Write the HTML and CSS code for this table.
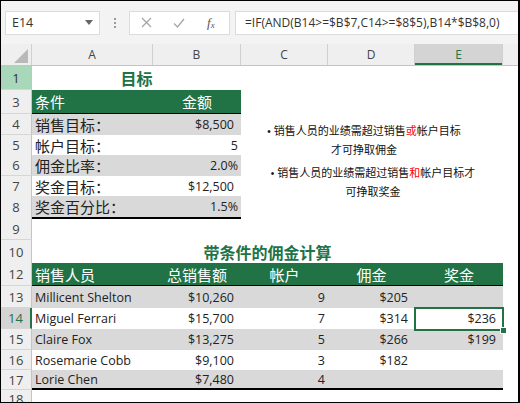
FILE: index.html
```html
<!DOCTYPE html>
<html lang="zh">
<head>
<meta charset="utf-8">
<link rel="stylesheet" href="styles.css">
</head>
<body>
<div class="app">
  <div class="toolbar">
    <div class="namebox"><span>E14</span><svg class="caret" width="8" height="5" viewBox="0 0 8 5"><path d="M0 0H8L4 5Z" fill="#666"/></svg></div>
    <div class="dots"><i></i><i></i><i></i></div>
    <div class="fxbox">
      <svg class="ic-x" width="11" height="11" viewBox="0 0 11 11"><path d="M1 1L10 10M10 1L1 10" stroke="#a6a6a6" stroke-width="1.3" fill="none"/></svg>
      <svg class="ic-ok" width="12" height="10" viewBox="0 0 12 10"><path d="M1 5.5L4.5 9L11 1" stroke="#a6a6a6" stroke-width="1.3" fill="none"/></svg>
      <span class="fx">f<sub>x</sub></span>
    </div>
    <div class="formula">=IF(AND(B14&gt;=$B$7,C14&gt;=$8$5),B14*$B$8,0)</div>
  </div>

  <div class="row colhead">
    <div class="corner"><svg width="14" height="14" viewBox="0 0 14 14"><path d="M14 0V14H0Z" fill="#b9b9b9"/></svg></div>
    <div class="ch">A</div><div class="ch">B</div><div class="ch">C</div><div class="ch">D</div><div class="ch ch-sel">E</div><div class="ch ch-last"></div>
  </div>

  <div class="row h24">
    <div class="rh rh-green">1</div>
    <div class="c title span2">目标</div>
    <div class="c"></div><div class="c"></div><div class="c"></div><div class="c"></div>
  </div>
  <div class="row h24">
    <div class="rh">3</div>
    <div class="c th zh l">条件</div><div class="c th zh ctr">金额</div>
    <div class="c"></div><div class="c"></div><div class="c"></div><div class="c"></div>
  </div>
  <div class="row h21">
    <div class="rh">4</div>
    <div class="c band zh l">销售目标：</div><div class="c band r cur">$8,500</div>
    <div class="c"></div><div class="c"></div><div class="c"></div><div class="c"></div>
  </div>
  <div class="row h20">
    <div class="rh">5</div>
    <div class="c zh l">帐户目标：</div><div class="c r num">5</div>
    <div class="c"></div><div class="c"></div><div class="c"></div><div class="c"></div>
  </div>
  <div class="row h21">
    <div class="rh">6</div>
    <div class="c band zh l">佣金比率：</div><div class="c band r num">2.0%</div>
    <div class="c"></div><div class="c"></div><div class="c"></div><div class="c"></div>
  </div>
  <div class="row h20">
    <div class="rh">7</div>
    <div class="c zh l">奖金目标：</div><div class="c r cur">$12,500</div>
    <div class="c"></div><div class="c"></div><div class="c"></div><div class="c"></div>
  </div>
  <div class="row h22">
    <div class="rh">8</div>
    <div class="c band last zh l">奖金百分比：</div><div class="c band last r num">1.5%</div>
    <div class="c"></div><div class="c"></div><div class="c"></div><div class="c"></div>
  </div>
  <div class="row h22">
    <div class="rh">9</div>
    <div class="c"></div><div class="c"></div><div class="c"></div><div class="c"></div><div class="c"></div><div class="c"></div>
  </div>
  <div class="row h23">
    <div class="rh">10</div>
    <div class="c title span5">带条件的佣金计算</div>
    <div class="c"></div>
  </div>
  <div class="row h23">
    <div class="rh">12</div>
    <div class="c th zh l">销售人员</div><div class="c th zh ctr">总销售额</div><div class="c th zh ctr">帐户</div><div class="c th zh ctr">佣金</div><div class="c th zh ctr">奖金</div>
    <div class="c"></div>
  </div>
  <div class="row h22">
    <div class="rh">13</div>
    <div class="c band l">Millicent Shelton</div><div class="c band r cur">$10,260</div><div class="c band r num">9</div><div class="c band r cur">$205</div><div class="c band"></div>
    <div class="c"></div>
  </div>
  <div class="row h21">
    <div class="rh rh-sel">14</div>
    <div class="c l">Miguel Ferrari</div><div class="c r cur">$15,700</div><div class="c r num">7</div><div class="c r cur">$314</div><div class="c r cur selcell">$236</div>
    <div class="c"></div>
  </div>
  <div class="row h21">
    <div class="rh">15</div>
    <div class="c band l">Claire Fox</div><div class="c band r cur">$13,275</div><div class="c band r num">5</div><div class="c band r cur">$266</div><div class="c band r cur">$199</div>
    <div class="c"></div>
  </div>
  <div class="row h20">
    <div class="rh">16</div>
    <div class="c l">Rosemarie Cobb</div><div class="c r cur">$9,100</div><div class="c r num">3</div><div class="c r cur">$182</div><div class="c"></div>
    <div class="c"></div>
  </div>
  <div class="row h20">
    <div class="rh">17</div>
    <div class="c band last l">Lorie Chen</div><div class="c band last r cur">$7,480</div><div class="c band last r num">4</div><div class="c band last"></div><div class="c band last"></div>
    <div class="c"></div>
  </div>
  <div class="row h14">
    <div class="rh">18</div>
    <div class="c"></div><div class="c"></div><div class="c"></div><div class="c"></div><div class="c"></div><div class="c"></div>
  </div>

  <div class="note n1"><span class="bul">•</span>销售人员的业绩需超过销售<span class="red">或</span>帐户目标<br>才可挣取佣金</div>
  <div class="note n2"><span class="bul">•</span>销售人员的业绩需超过销售<span class="red">和</span>帐户目标才<br>可挣取奖金</div>
</div>
</body>
</html>
```

FILE: styles.css
```css
html, body {
  margin: 0;
  padding: 0;
  background: #fff;
}
.app {
  position: relative;
  width: 520px;
  height: 403px;
  box-sizing: border-box;
  border: 1px solid #000;
  border-right-width: 2px;
  overflow: hidden;
  background: #fff;
  font-family: "Open Sans", "Noto Sans CJK SC", sans-serif;
  color: #222;
}

/* toolbar */
.toolbar {
  height: 43px;
  background: #f3f3f3;
  display: flex;
  align-items: center;
  padding-left: 4px;
}
.namebox {
  box-sizing: border-box;
  width: 95px;
  height: 24px;
  background: #fff;
  border: 1px solid #dcdcdc;
  display: flex;
  align-items: center;
  justify-content: space-between;
  padding: 0 6px 0 6px;
  font-size: 12.5px;
  color: #333;
}
.dots {
  margin-left: 14px;
  display: flex;
  flex-direction: column;
  gap: 2px;
}
.dots i {
  display: block;
  width: 2px;
  height: 2px;
  background: #9a9a9a;
}
.fxbox {
  box-sizing: border-box;
  margin-left: 13px;
  width: 101px;
  height: 24px;
  background: #fff;
  border: 1px solid #dcdcdc;
  display: flex;
  align-items: center;
  padding-left: 11px;
}
.ic-ok {
  margin-left: 21px;
}
.fx {
  margin-left: 22px;
  font-family: "Liberation Serif", serif;
  font-style: italic;
  font-size: 13px;
  color: #555;
}
.fx sub {
  font-size: 9px;
  vertical-align: -1px;
}
.formula {
  box-sizing: border-box;
  margin-left: 5px;
  margin-right: -6px;
  flex: 1;
  height: 24px;
  background: #fff;
  border: 1px solid #dcdcdc;
  display: flex;
  align-items: center;
  padding-left: 9px;
  font-size: 12px;
  color: #333;
  white-space: nowrap;
  overflow: hidden;
}

/* grid rows */
.row {
  display: grid;
  grid-template-columns: 31px 121px 88px 87px 87px 88px 1fr;
}
.colhead {
  height: 22px;
  background: #efefef;
  border-bottom: 1px solid #c4c4c4;
  box-sizing: border-box;
}
.corner {
  border-right: 1px solid #d0d0d0;
  display: flex;
  align-items: flex-end;
  justify-content: flex-end;
  padding: 0 3px 2px 0;
}
.ch {
  border-right: 1px solid #d0d0d0;
  display: flex;
  align-items: center;
  justify-content: center;
  font-size: 12px;
  color: #444;
}
.ch-sel {
  background: #d4d4d4;
  color: #217346;
  box-shadow: inset 0 -2px 0 #217346;
}
.ch-last {
  border-right: none;
}
.h24 { height: 24px; }
.h23 { height: 23px; }
.h22 { height: 22px; }
.h21 { height: 21px; }
.h20 { height: 20px; }
.h14 { height: 14px; }

.rh {
  box-sizing: border-box;
  background: #efefef;
  border-right: 1px solid #c4c4c4;
  border-bottom: 1px solid #d6d6d6;
  display: flex;
  align-items: center;
  justify-content: center;
  font-size: 13px;
  color: #444;
}
.rh-green {
  background: #a8d8b9;
  color: #333;
}
.rh-sel {
  background: #d4d4d4;
  color: #217346;
  border-right: 2px solid #217346;
}

.c {
  box-sizing: border-box;
  display: flex;
  align-items: center;
  font-size: 12.5px;
  white-space: nowrap;
  min-width: 0;
}
.zh {
  font-family: "Noto Sans CJK SC", sans-serif;
  font-size: 15px;
}
.l { padding-left: 3px; }
.r { justify-content: flex-end; }
.ctr { justify-content: center; }
.cur { padding-right: 7px; }
.num { padding-right: 3px; }
.span2 { grid-column: span 2; }
.span5 { grid-column: span 5; }
.title {
  justify-content: center;
  font-family: "Noto Sans CJK SC", sans-serif;
  font-weight: bold;
  font-size: 16px;
  color: #217346;
}
.th {
  background: #217346;
  color: #fff;
  border-bottom: 1px solid #000;
}
.band { background: #d9d9d9; }
.last { border-bottom: 2px solid #000; }

.selcell {
  position: relative;
}
.selcell::after {
  content: "";
  position: absolute;
  left: -1px;
  top: -1px;
  right: -1px;
  bottom: -2px;
  border: 2px solid #217346;
}
.selcell::before {
  content: "";
  position: absolute;
  right: -4px;
  bottom: -5px;
  width: 5px;
  height: 5px;
  background: #217346;
  border: 1px solid #fff;
  z-index: 2;
}

/* floating text boxes */
.note {
  position: absolute;
  font-family: "Noto Sans CJK SC", sans-serif;
  font-size: 11px;
  line-height: 16.5px;
  text-align: center;
  color: #111;
  white-space: nowrap;
}
.n1 {
  left: 254px;
  top: 121px;
  width: 218px;
}
.n2 {
  left: 262px;
  top: 163px;
  width: 220px;
}
.bul {
  font-family: "Liberation Sans", sans-serif;
  font-size: 10px;
  margin-right: 3px;
}
.red { color: #ff0000; }
```
